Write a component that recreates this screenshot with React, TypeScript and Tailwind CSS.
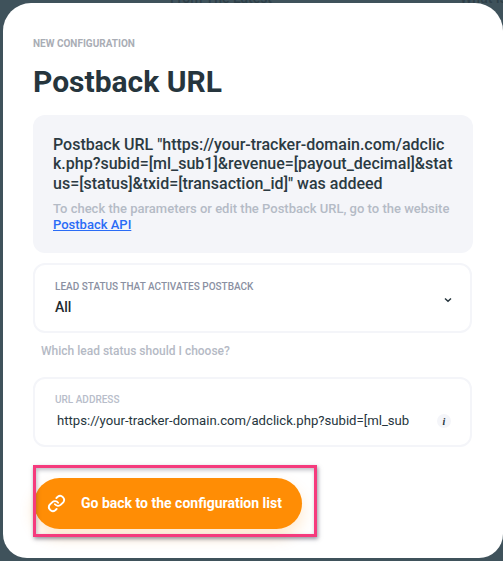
const roboto = { fontFamily: 'Roboto, sans-serif' };

export default function App() {
  return (
    <div className="h-[561px] w-[503px] overflow-hidden bg-[#3f525b]" style={roboto}>
      {/* page behind the modal, only its last pixels show */}
      <div className="flex h-[3px] items-end overflow-hidden pl-[170px] text-[14px] font-medium leading-[10px] text-[#2e3f48]">
        <span className="shrink-0">From The Latest</span>
        <span className="ml-[188px] shrink-0">What Is</span>
      </div>
      <div className="ml-[3px] h-[555px] w-[500px] rounded-tl-[28px] rounded-tr-[28px] rounded-bl-[24px] rounded-br-[24px] bg-white pl-[30px] pr-[30px] pt-[35px]">
        <p className="text-[10px] font-bold uppercase leading-[12px] text-[#a9adb5]">New configuration</p>
        <h1 className="mt-[12px] text-[30px] font-bold leading-[40px] text-[#26353d]">Postback URL</h1>

        <div className="mt-[13px] h-[138px] w-[440px] rounded-xl bg-[#f4f5f9] px-5 pt-[20px]">
          <p className="break-all text-[16px] font-medium leading-[19.3px] text-[#2b3a42]">
            Postback URL "https://your-tracker-domain.com/adclick.php?subid=[ml_sub1]&revenue=[payout_decimal]&status=[status]&txid=[transaction_id]" was addeed
          </p>
          <p className="mt-[8px] text-[13px] font-medium leading-[16px] text-[#b4bbc6]">
            To check the parameters or edit the Postback URL, go to the website{' '}
            <a href="#" className="text-[#2a6cf6] underline">Postback API</a>
          </p>
        </div>

        <div className="mt-[10px] flex h-[70px] w-[439px] items-center justify-between rounded-xl border-2 border-[#f4f5f9] pl-5 pr-[18px]">
          <div>
            <p className="text-[10px] font-medium uppercase leading-[12px] text-[#8a90a2]">Lead status that activates postback</p>
            <p className="mt-[6px] text-[14px] font-medium leading-[16px] text-[#1f2a30]">All</p>
          </div>
          <svg width="8" height="6" viewBox="0 0 8 6" fill="none" className="mt-[3px]">
            <path d="M1 1.5 4 4.2 7 1.5" stroke="#26353d" strokeWidth="1.5" />
          </svg>
        </div>

        <p className="mt-[11px] pl-2 text-[12px] font-medium leading-[14px] text-[#b5bac5]">Which lead status should I choose?</p>

        <div className="mt-[19px] flex h-[70px] w-[439px] flex-col rounded-xl border-2 border-[#f4f5f9] pl-5 pr-[19px] pt-[15px]">
          <p className="text-[10px] font-medium uppercase leading-[12px] text-[#b8bdca]">URL address</p>
          <div className="mt-[7px] flex items-center justify-between pl-[2px]">
            <span className="text-[13.15px] leading-[16px] text-[#26353d]">https://your-tracker-domain.com/adclick.php?subid=[ml_sub</span>
            <span className="flex h-[14px] w-[14px] items-center justify-center rounded-full bg-[#f4f5f9] text-[10px] font-bold italic text-[#26353d]" style={{ fontFamily: '"Liberation Serif", serif' }}>i</span>
          </div>
        </div>

        <div className="relative mt-[18px] h-[72px] w-[284px] pl-px pt-[13px]">
          <button
            type="button"
            className="flex h-[51px] w-[268px] items-center gap-[15px] rounded-full bg-[#ff8d05] pl-[13px] text-[14px] font-bold text-white shadow-[0_8px_16px_rgba(255,141,5,0.2)]"
          >
            <LinkIcon />
            Go back to the configuration list
          </button>
          {/* highlight frame drawn over the button */}
          <div className="pointer-events-none absolute inset-0 border-[3px] border-[#f53b7d] shadow-[1px_2px_4px_rgba(60,60,80,0.55),inset_1px_2px_4px_rgba(60,60,80,0.35)]" />
        </div>
      </div>
    </div>
  );
}

function LinkIcon() {
  return (
    <svg width="19" height="19" viewBox="0 0 24 24" fill="none" stroke="white" strokeWidth="2.4" strokeLinecap="round" strokeLinejoin="round">
      <path d="M10 13a5 5 0 0 0 7.5.5l3-3a5 5 0 0 0-7-7l-1.7 1.7" />
      <path d="M14 11a5 5 0 0 0-7.5-.5l-3 3a5 5 0 0 0 7 7l1.7-1.7" />
    </svg>
  );
}
